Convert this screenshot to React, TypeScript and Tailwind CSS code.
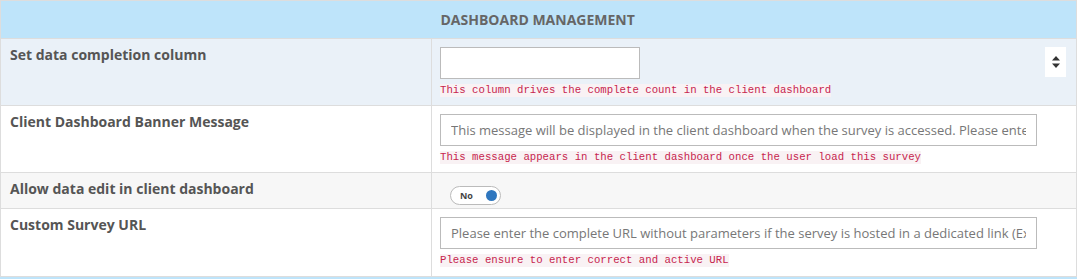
const labelCls = 'align-top border border-[#ddd] px-[9px] pt-[7px] pb-[9px] text-[14px] leading-[18px] font-bold text-[#555] w-[431px]';
const valueCls = 'align-top border border-[#ddd] px-[8px] pt-[8px] pb-[8px]';

function Hint({ children }: { children: React.ReactNode }) {
  return (
    <div className="mt-[5px] flex">
      <code className="block bg-[#f9f2f4] text-[#c7254e] text-[10.7px] leading-[13px] font-['Liberation_Mono',monospace]">
        {children}
      </code>
    </div>
  );
}

function SortIcon() {
  return (
    <svg width="8" height="12" viewBox="0 0 8 12" className="text-[#333]">
      <path d="M4 0 L8 4.5 H0 Z" fill="currentColor" />
      <path d="M0 7.5 H8 L4 12 Z" fill="currentColor" />
    </svg>
  );
}

export default function App() {
  return (
    <div className="bg-white w-[1082px] h-[279px] overflow-hidden font-['Open_Sans',sans-serif]">
      <table className="w-[1077px] border-collapse border border-[#ddd]">
        <tbody>
          <tr className="bg-[#bee4fa] h-[38px]">
            <td className="border-y border-l border-[#ddd]"></td>
            <td className="border-y border-r border-[#ddd] px-[9px] text-[14px] font-bold text-[#666] align-middle">
              DASHBOARD MANAGEMENT
            </td>
          </tr>
          <tr className="bg-[#eaf1f8]">
            <td className={labelCls}>Set data completion column</td>
            <td className={valueCls}>
              <div className="flex justify-between items-start">
                <div>
                  <input className="block w-[200px] h-[32px] bg-white border border-[#bbb] outline-none" />
                  <Hint>This column drives the complete count in the client dashboard</Hint>
                </div>
                <div className="w-[21px] h-[30px] bg-white flex items-center justify-center mr-[2px]">
                  <SortIcon />
                </div>
              </div>
            </td>
          </tr>
          <tr className="bg-white">
            <td className={labelCls}>Client Dashboard Banner Message</td>
            <td className={valueCls}>
              <input
                className="block w-[597px] h-[32px] bg-white border border-[#bbb] px-[10px] text-[13px] text-[#555] placeholder:text-[#777] outline-none"
                placeholder="This message will be displayed in the client dashboard when the survey is accessed. Please enter the message"
              />
              <Hint>This message appears in the client dashboard once the user load this survey</Hint>
            </td>
          </tr>
          <tr className="bg-[#f7f7f7]">
            <td className={labelCls}>Allow data edit in client dashboard</td>
            <td className="align-top border border-[#ddd] px-[8px] pt-[13px] pb-[3px]">
              <div className="ml-[10px] w-[51px] h-[19px] rounded-full border border-[#bbb] bg-white flex items-center justify-between pl-[9px] pr-[3px]">
                <span className="text-[9px] font-bold text-[#444] leading-none">No</span>
                <span className="w-[11px] h-[11px] rounded-full bg-[#2f77bf]"></span>
              </div>
            </td>
          </tr>
          <tr className="bg-white">
            <td className={labelCls}>Custom Survey URL</td>
            <td className="align-top border border-[#ddd] px-[8px] pt-[8px] pb-[9px]">
              <input
                className="block w-[597px] h-[32px] bg-white border border-[#bbb] px-[10px] text-[13px] text-[#555] placeholder:text-[#777] outline-none"
                placeholder="Please enter the complete URL without parameters if the servey is hosted in a dedicated link (Ex: https://)"
              />
              <Hint>Please ensure to enter correct and active URL</Hint>
            </td>
          </tr>
        </tbody>
      </table>
      <div className="w-[1077px] h-[4px] bg-[#bee4fa]"></div>
    </div>
  );
}
